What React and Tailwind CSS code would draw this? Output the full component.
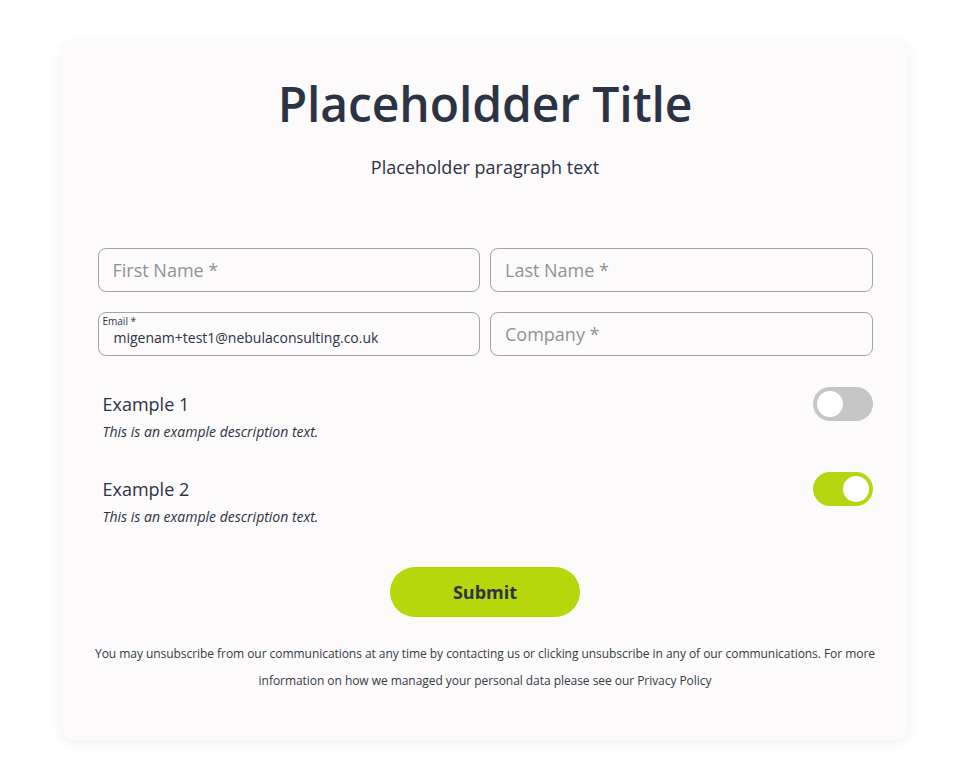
import React from "react";

const font = { fontFamily: '"Open Sans", "Noto Sans", sans-serif' };

function Toggle({ on }) {
  return (
    <div
      className={`w-[60px] h-[34px] rounded-full p-[4px] flex items-center ${
        on ? "bg-[#b5d50f] justify-end" : "bg-[#c6c6c6] justify-start"
      }`}
    >
      <div className="w-[26px] h-[26px] rounded-full bg-white" />
    </div>
  );
}

function Row({ title, on }) {
  return (
    <div className="flex items-start justify-between pl-[5px]">
      <div className="flex flex-col">
        <div className="text-[18px] leading-[24px] text-[#2b3344] mt-[5px]">{title}</div>
        <div className="text-[14px] leading-[18px] italic text-[#2b3344] mt-[7px]">
          This is an example description text.
        </div>
      </div>
      <Toggle on={on} />
    </div>
  );
}

export default function App() {
  return (
    <div className="min-h-[784px] bg-white pt-[43px] px-[62px]" style={font}>
      <div className="w-[846px] h-[697px] bg-[#fcfafb] rounded-[12px] shadow-[0_2px_14px_rgba(0,0,0,0.07)] flex flex-col items-center pt-[33px]">
        <h1 className="text-[48px] leading-[56px] font-semibold text-[#2b3344] tracking-[-0.1px]">
          Placeholdder Title
        </h1>
        <p className="text-[18px] leading-[24px] text-[#2b3344] mt-[23px]">
          Placeholder paragraph text
        </p>

        <div className="w-[775px] mt-[69px] flex flex-col">
          <div className="grid grid-cols-2 gap-[10px]">
            <div className="h-[44px] rounded-[8px] border border-[#a3a3a3] flex items-center px-[14px] text-[18px] text-[#8d939a]">
              First Name *
            </div>
            <div className="h-[44px] rounded-[8px] border border-[#a3a3a3] flex items-center px-[14px] text-[18px] text-[#8d939a]">
              Last Name *
            </div>
          </div>
          <div className="grid grid-cols-2 gap-[10px] mt-[20px]">
            <div className="h-[44px] rounded-[8px] border border-[#a3a3a3] flex flex-col pl-[4px] pt-[2px]">
              <div className="text-[10px] leading-[13px] text-[#2b3344]">Email *</div>
              <div className="text-[14px] leading-[20px] text-[#2b3344] pl-[11px]">
                migenam+test1@nebulaconsulting.co.uk
              </div>
            </div>
            <div className="h-[44px] rounded-[8px] border border-[#a3a3a3] flex items-center px-[14px] text-[18px] text-[#8d939a]">
              Company *
            </div>
          </div>

          <div className="mt-[31px] flex flex-col gap-[31px]">
            <Row title="Example 1" on={false} />
            <Row title="Example 2" on={true} />
          </div>
        </div>

        <button className="mt-[41px] w-[190px] h-[50px] rounded-full bg-[#b6d70c] text-[18px] font-bold text-[#2b3344]">
          Submit
        </button>

        <p className="mt-[23px] w-[820px] text-center text-[12px] leading-[27px] text-[#333a45] tracking-[-0.05px]">
          You may unsubscribe from our communications at any time by contacting us or clicking unsubscribe in any of our communications. For more information on how we managed your personal data please see our Privacy Policy
        </p>
      </div>
    </div>
  );
}
